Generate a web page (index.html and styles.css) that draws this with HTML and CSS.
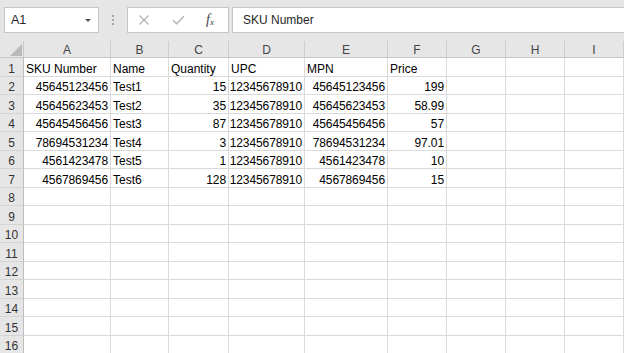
FILE: index.html
```html
<!DOCTYPE html>
<html>
<head>
<meta charset="utf-8">
<link rel="stylesheet" href="styles.css">
</head>
<body>
<div class="toolbar">
  <div class="namebox"><span>A1</span><span class="caret"></span></div>
  <div class="grip"><i></i><i></i><i></i></div>
  <div class="fbuttons">
    <svg class="ico" width="12" height="12" viewBox="0 0 12 12"><path d="M1.5 1.5 L10.5 10.5 M10.5 1.5 L1.5 10.5" stroke="#b4b4b4" stroke-width="1.3" fill="none"/></svg>
    <svg class="ico" width="13" height="10" viewBox="0 0 13 10"><path d="M1 5.2 L4.6 8.8 L12 1.2" stroke="#b4b4b4" stroke-width="1.4" fill="none"/></svg>
    <span class="fx">f<sub>x</sub></span>
  </div>
  <div class="finput">SKU Number</div>
</div>
<div class="sheet">
  <div class="corner"><span class="tri"></span></div>
  <div class="ch">A</div><div class="ch">B</div><div class="ch">C</div><div class="ch">D</div><div class="ch">E</div><div class="ch">F</div><div class="ch">G</div><div class="ch">H</div><div class="ch">I</div>

  <div class="rh">1</div><div class="c">SKU Number</div><div class="c">Name</div><div class="c">Quantity</div><div class="c">UPC</div><div class="c">MPN</div><div class="c">Price</div><div class="c"></div><div class="c"></div><div class="c"></div>
  <div class="rh">2</div><div class="c n">45645123456</div><div class="c">Test1</div><div class="c n">15</div><div class="c n">12345678910</div><div class="c n">45645123456</div><div class="c n">199</div><div class="c"></div><div class="c"></div><div class="c"></div>
  <div class="rh">3</div><div class="c n">45645623453</div><div class="c">Test2</div><div class="c n">35</div><div class="c n">12345678910</div><div class="c n">45645623453</div><div class="c n">58.99</div><div class="c"></div><div class="c"></div><div class="c"></div>
  <div class="rh">4</div><div class="c n">45645456456</div><div class="c">Test3</div><div class="c n">87</div><div class="c n">12345678910</div><div class="c n">45645456456</div><div class="c n">57</div><div class="c"></div><div class="c"></div><div class="c"></div>
  <div class="rh">5</div><div class="c n">78694531234</div><div class="c">Test4</div><div class="c n">3</div><div class="c n">12345678910</div><div class="c n">78694531234</div><div class="c n">97.01</div><div class="c"></div><div class="c"></div><div class="c"></div>
  <div class="rh">6</div><div class="c n">4561423478</div><div class="c">Test5</div><div class="c n">1</div><div class="c n">12345678910</div><div class="c n">4561423478</div><div class="c n">10</div><div class="c"></div><div class="c"></div><div class="c"></div>
  <div class="rh">7</div><div class="c n">4567869456</div><div class="c">Test6</div><div class="c n">128</div><div class="c n">12345678910</div><div class="c n">4567869456</div><div class="c n">15</div><div class="c"></div><div class="c"></div><div class="c"></div>
  <div class="rh">8</div><div class="c"></div><div class="c"></div><div class="c"></div><div class="c"></div><div class="c"></div><div class="c"></div><div class="c"></div><div class="c"></div><div class="c"></div>
  <div class="rh">9</div><div class="c"></div><div class="c"></div><div class="c"></div><div class="c"></div><div class="c"></div><div class="c"></div><div class="c"></div><div class="c"></div><div class="c"></div>
  <div class="rh">10</div><div class="c"></div><div class="c"></div><div class="c"></div><div class="c"></div><div class="c"></div><div class="c"></div><div class="c"></div><div class="c"></div><div class="c"></div>
  <div class="rh">11</div><div class="c"></div><div class="c"></div><div class="c"></div><div class="c"></div><div class="c"></div><div class="c"></div><div class="c"></div><div class="c"></div><div class="c"></div>
  <div class="rh">12</div><div class="c"></div><div class="c"></div><div class="c"></div><div class="c"></div><div class="c"></div><div class="c"></div><div class="c"></div><div class="c"></div><div class="c"></div>
  <div class="rh">13</div><div class="c"></div><div class="c"></div><div class="c"></div><div class="c"></div><div class="c"></div><div class="c"></div><div class="c"></div><div class="c"></div><div class="c"></div>
  <div class="rh">14</div><div class="c"></div><div class="c"></div><div class="c"></div><div class="c"></div><div class="c"></div><div class="c"></div><div class="c"></div><div class="c"></div><div class="c"></div>
  <div class="rh">15</div><div class="c"></div><div class="c"></div><div class="c"></div><div class="c"></div><div class="c"></div><div class="c"></div><div class="c"></div><div class="c"></div><div class="c"></div>
  <div class="rh">16</div><div class="c"></div><div class="c"></div><div class="c"></div><div class="c"></div><div class="c"></div><div class="c"></div><div class="c"></div><div class="c"></div><div class="c"></div>
</div>
</body>
</html>
```

FILE: styles.css
```css
html, body {
  margin: 0;
  padding: 0;
  background: #ffffff;
  overflow: hidden;
}
body {
  font-family: "Liberation Sans", Arial, sans-serif;
  font-size: 12px;
  color: #000;
  width: 624px;
  height: 353px;
}
.toolbar {
  display: flex;
  align-items: flex-start;
  height: 41px;
  box-sizing: border-box;
  padding: 7px 0 0 4px;
  background: #e6e6e6;
}
.namebox {
  width: 95px;
  height: 26px;
  box-sizing: border-box;
  background: #fff;
  border: 1px solid #c6c6c6;
  display: flex;
  align-items: center;
  justify-content: space-between;
  padding: 0 7px 0 6px;
  color: #262626;
  font-size: 12.5px;
}
.caret {
  width: 0;
  height: 0;
  border-left: 3px solid transparent;
  border-right: 3px solid transparent;
  border-top: 3px solid #555;
}
.grip {
  width: 28px;
  height: 26px;
  display: flex;
  flex-direction: column;
  align-items: center;
  justify-content: center;
  gap: 2px;
}
.grip i {
  width: 2px;
  height: 2px;
  background: #a8a8a8;
}
.fbuttons {
  width: 102px;
  height: 26px;
  box-sizing: border-box;
  background: #fff;
  border: 1px solid #c6c6c6;
  display: flex;
  align-items: center;
  padding: 0 0 0 10px;
  gap: 22px;
}
.fx {
  font-family: "Liberation Serif", "Times New Roman", serif;
  font-style: italic;
  font-size: 14px;
  color: #444;
  margin-left: -1px;
}
.fx sub {
  font-size: 9px;
  vertical-align: -1px;
}
.finput {
  margin-left: 3px;
  flex: 1;
  height: 26px;
  box-sizing: border-box;
  background: #fff;
  border: 1px solid #c6c6c6;
  border-right: none;
  padding: 0 0 0 10px;
  display: flex;
  align-items: center;
  color: #262626;
}
.sheet {
  display: grid;
  grid-template-columns: 24px 87px 58px 60px 76px 83px 59px 59px 59px 59px;
  grid-template-rows: 17px repeat(16, 18.5px);
}
.corner {
  background: #e6e6e6;
  border-right: 1px solid #c6c6c6;
  border-bottom: 1px solid #c6c6c6;
  position: relative;
}
.tri {
  position: absolute;
  right: 1px;
  bottom: 1px;
  width: 0;
  height: 0;
  border-left: 12px solid transparent;
  border-bottom: 12px solid #b9b9b9;
}
.ch {
  background: #e6e6e6;
  border-right: 1px solid #cdcdcd;
  border-bottom: 1px solid #c6c6c6;
  display: flex;
  align-items: center;
  justify-content: center;
  color: #444;
  padding-top: 1px;
}
.rh {
  background: #e6e6e6;
  border-right: 1px solid #bdbdbd;
  border-bottom: 1px solid #d4d4d4;
  display: flex;
  align-items: flex-end;
  justify-content: center;
  color: #333;
  line-height: 14px;
  padding-bottom: 0;
}
.c {
  border-right: 1px solid #dadada;
  border-bottom: 1px solid #dadada;
  display: flex;
  align-items: flex-end;
  padding: 0 2px 0 2px;
  line-height: 14px;
  white-space: nowrap;
  overflow: hidden;
}
.c.n {
  justify-content: flex-end;
  letter-spacing: -0.1px;
}
.sheet > *, .toolbar > * {
  box-sizing: border-box;
}
```
